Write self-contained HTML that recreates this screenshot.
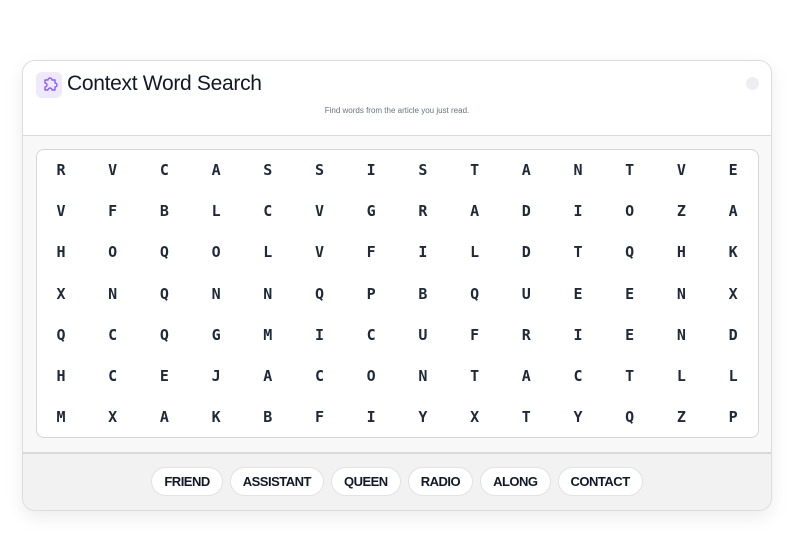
<!DOCTYPE html>
<html><head><style>
*{box-sizing:border-box;margin:0;padding:0}
body{width:803px;height:534px;background:#fff;font-family:"Liberation Sans",sans-serif;position:relative;overflow:hidden}
.card{position:absolute;left:22px;top:60px;width:750px;height:451px;border:1px solid #dcdcdc;border-radius:13px;background:#fff;box-shadow:0 6px 18px rgba(0,0,0,0.08);overflow:hidden}
.hdr{position:absolute;left:0;top:0;width:100%;height:75px;border-bottom:1px solid #d9d9d9;background:#fff}
.icon{position:absolute;left:13px;top:11px;width:26px;height:26px;border-radius:6px;background:#efe9fd}
.title{position:absolute;left:44px;top:11px;font-size:21px;color:#111827;letter-spacing:-0.3px}
.sub{position:absolute;left:0;width:100%;top:45px;text-align:center;font-size:8px;color:#6b7280;padding-left:0}
.dot{position:absolute;left:723px;top:16px;width:13px;height:13px;border-radius:50%;background:#eeeef2}
.mid{position:absolute;left:0;top:75px;width:100%;height:316px;background:#f8f8f8}
.grid{position:absolute;left:13px;top:13px;width:723px;height:289px;background:#fff;border:1px solid #d6d6d6;border-radius:8px}
.l{position:absolute;width:30px;margin-left:-15px;text-align:center;font-family:"DejaVu Sans Mono",monospace;font-weight:bold;font-size:15px;color:#1f2937;line-height:18px;margin-top:-9px}
.ftr{position:absolute;left:0;top:391px;width:100%;height:60px;background:#f2f2f2;border-top:2px solid #d9d9d9}
.pills{position:absolute;left:0;width:100%;top:13px;text-align:center;font-size:0}
.p{display:inline-block;height:29px;line-height:27px;padding:0 12px;margin:0 3.5px;background:#fff;border:1px solid #e2e2e2;border-radius:15px;font-size:13px;font-weight:bold;color:#111827;letter-spacing:-0.5px}
</style></head><body>
<div class="card">
<div class="hdr">
<div class="icon"><svg width="26" height="26" viewBox="0 0 26 26"><path d="M9 8h3a2 2 0 1 1 4 0h3v3a2 2 0 1 1 0 4v3h-3a2 2 0 1 0-4 0H9v-3a2 2 0 1 0 0-4z" fill="none" stroke="#8b5cf6" stroke-width="1.4" stroke-linejoin="round"/></svg></div>
<div class="title">Context Word Search</div>
<div class="sub">Find words from the article you just read.</div>
<div class="dot"></div>
</div>
<div class="mid"><div class="grid" id="g"></div></div>
<div class="ftr"><div class="pills"><span class="p">FRIEND</span><span class="p">ASSISTANT</span><span class="p">QUEEN</span><span class="p">RADIO</span><span class="p">ALONG</span><span class="p">CONTACT</span></div></div>
</div>
<script>
var rows=["RVCASSISTANTVE","VFBLCVGRADIOZA","HOQOLVFILDTQHK","XNQNNQPBQUEENX","QCQGMICUFRIEND","HCEJACONTACTLL","MXAKBFIYXTYQZP"];
var g=document.getElementById('g'),h='';
for(var r=0;r<7;r++)for(var c=0;c<14;c++){
h+='<div class="l" style="left:'+(24+c*51.7).toFixed(1)+'px;top:'+(20+r*41.2).toFixed(1)+'px">'+rows[r][c]+'</div>';}
g.innerHTML=h;
</script>
</body></html>
